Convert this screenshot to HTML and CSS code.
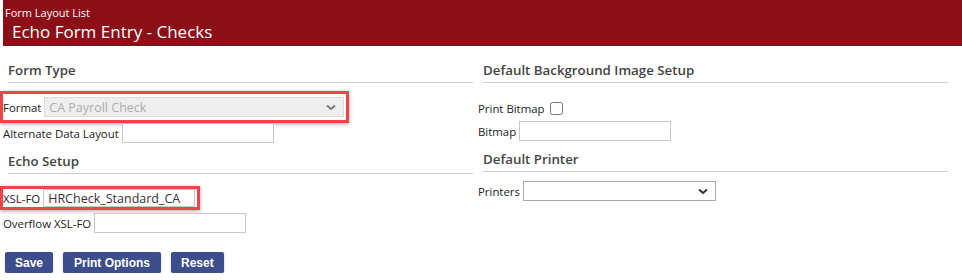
FILE: index.html
```html
<!DOCTYPE html>
<html lang="en">
<head>
    <meta charset="UTF-8">
    <meta name="viewport" content="width=device-width, initial-scale=1.0">
    <title>Echo Form Entry - Checks</title>
    <link rel="stylesheet" href="styles.css">
</head>
<body>
    <div class="page-header">
        <div class="crumb">Form Layout List</div>
        <div class="page-title">Echo Form Entry - Checks</div>
    </div>

    <div class="columns">
        <div class="column">
            <h3 class="section first">Form Type</h3>
            <div class="mark mark-format">
                <label for="format">Format</label>
                <div class="select-wrap disabled">
                    <select id="format" class="select" disabled>
                        <option>CA Payroll Check</option>
                    </select>
                    <svg class="chevron" width="10" height="7" viewBox="0 0 10 7"><path d="M1 1.5l4 3.5 4-3.5" fill="none" stroke="#777" stroke-width="2"/></svg>
                </div>
            </div>
            <div class="row">
                <label for="altLayout">Alternate Data Layout</label>
                <input type="text" id="altLayout" class="text">
            </div>

            <h3 class="section">Echo Setup</h3>
            <div class="mark mark-xsl">
                <label for="xslfo">XSL-FO</label>
                <input type="text" id="xslfo" class="text" value="HRCheck_Standard_CA">
            </div>
            <div class="row tight">
                <label for="overflow">Overflow XSL-FO</label>
                <input type="text" id="overflow" class="text">
            </div>

            <div class="buttons">
                <button type="button" class="btn">Save</button>
                <button type="button" class="btn">Print Options</button>
                <button type="button" class="btn">Reset</button>
            </div>
        </div>

        <div class="column">
            <h3 class="section first">Default Background Image Setup</h3>
            <div class="row bitmap-check">
                <label for="printBitmap">Print Bitmap</label>
                <input type="checkbox" id="printBitmap" class="check">
            </div>
            <div class="row tight">
                <label for="bitmap">Bitmap</label>
                <input type="text" id="bitmap" class="text">
            </div>

            <h3 class="section">Default Printer</h3>
            <div class="row printers">
                <label for="printers">Printers</label>
                <div class="select-wrap">
                    <select id="printers" class="select printer-select">
                        <option></option>
                    </select>
                    <svg class="chevron" width="10" height="7" viewBox="0 0 10 7"><path d="M1 1.5l4 3.5 4-3.5" fill="none" stroke="#333" stroke-width="2"/></svg>
                </div>
            </div>
        </div>
    </div>
</body>
</html>
```

FILE: styles.css
```css
body {
    margin: 0;
    font-family: "Open Sans", "Noto Sans", sans-serif;
    font-size: 11.4px;
    color: #222;
    background-color: #fff;
}
.page-header {
    margin-left: 3px;
    height: 46px;
    background-color: #8c0e17;
    color: #fff;
    box-sizing: border-box;
    padding-top: 6px;
}
.crumb {
    padding-left: 2px;
    font-size: 11px;
    line-height: 14px;
}
.page-title {
    padding-left: 9px;
    padding-top: 1px;
    font-size: 17px;
    line-height: 22px;
}
.columns {
    display: grid;
    grid-template-columns: 470px 470px;
    column-gap: 5px;
    padding-left: 3px;
}
.column {
    display: flex;
    flex-direction: column;
    align-items: flex-start;
}
.section {
    align-self: stretch;
    margin: 0 0 0 5px;
    padding: 8px 0 2px 0;
    font-size: 13.3px;
    font-weight: 600;
    line-height: 20px;
    color: #444;
    border-bottom: 1px solid #cfcfcf;
}
.section.first {
    padding-top: 14px;
}
.row, .mark {
    display: flex;
    align-items: center;
    white-space: nowrap;
}
.row label, .mark label {
    margin-right: 3px;
}
.text {
    width: 152px;
    height: 20px;
    box-sizing: border-box;
    border: 1px solid #c8c8c8;
    padding: 0 4px;
    font-family: inherit;
    font-size: 12px;
    color: #333;
}
.mark {
    margin-left: -3px;
    border: 3px solid #f0444a;
    box-shadow: 0 1px 4px rgba(0, 0, 0, 0.35);
}
.mark-format {
    margin-top: 8px;
    padding: 3px 2px 3px 0;
}
.mark-xsl {
    margin-top: 12px;
    padding: 0 2px 0 0;
}
.mark-xsl .text {
    height: 18px;
    font-size: 12.5px;
}
.select-wrap {
    position: relative;
    display: flex;
}
.select {
    appearance: none;
    width: 300px;
    height: 20px;
    box-sizing: border-box;
    border: 1px solid #cfcfcf;
    background-color: #e8e8e8;
    padding: 0 4px;
    font-family: inherit;
    font-size: 12.5px;
    color: #8a8a8a;
}
.chevron {
    position: absolute;
    right: 8px;
    top: 7px;
}
.printer-select {
    width: 193px;
    background-color: #fff;
    border-color: #aaa;
    color: #222;
}
.printers {
    margin-top: 9px;
}
.bitmap-check {
    margin-top: 15px;
    height: 20px;
}
.check {
    margin: 0 0 0 2px;
    width: 13px;
    height: 13px;
}
.tight {
    margin-top: 3px;
}
.buttons {
    display: flex;
    gap: 10px;
    margin: 19px 0 0 2px;
}
.btn {
    height: 21px;
    padding: 0 10px;
    border: none;
    border-radius: 2px;
    background-color: #3e4d8c;
    color: #fff;
    font-family: "Liberation Sans", Arial, sans-serif;
    font-size: 12px;
    font-weight: bold;
    cursor: pointer;
    box-shadow: 0 1px 2px rgba(0, 0, 0, 0.25);
}
.btn:nth-child(2) {
    padding: 0 11px;
}
.btn:hover {
    background-color: #2f3c72;
}
```
